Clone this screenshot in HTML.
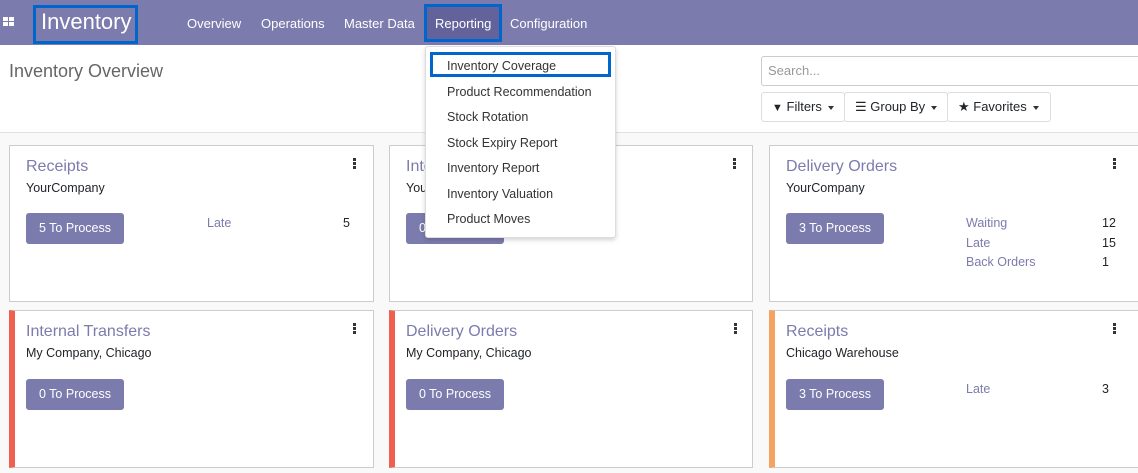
<!DOCTYPE html>
<html><head><style>
*{box-sizing:border-box;margin:0;padding:0}
body{width:1138px;height:473px;overflow:hidden;background:#f9f9f9;font-family:"Liberation Sans",sans-serif;font-size:13px;color:#212529;position:relative}
.nav{position:absolute;left:0;top:0;width:1138px;height:45px;background:#7c7bad;color:#fff}
.nav .m{position:absolute;top:16px;font-size:13px}
.abs{position:absolute}
.cp{position:absolute;left:0;top:45px;width:1138px;height:88px;background:#fff;border-bottom:1px solid #dee2e6}
.card{position:absolute;background:#fff;border:1px solid #ccc}
.card .t{position:absolute;left:16px;top:12px;font-size:16px;color:#7c7bad}
.card .s{position:absolute;left:16px;top:35px;font-size:12.5px}
.btn{position:absolute;left:16px;width:98px;height:31px;background:#7c7bad;color:#fff;border-radius:3px;font-size:12.5px;line-height:31px;text-align:center}
.dots{position:absolute;width:3px;top:12px}
.dots i{display:block;width:3px;height:3px;background:#333;margin-bottom:1px}
.lk{position:absolute;color:#7c7bad;font-size:12.5px}
.num{position:absolute;font-size:12.5px}
.dd{position:absolute;left:425px;top:46px;width:191px;height:192px;background:#fff;border:1px solid #ddd;border-radius:3px;box-shadow:0 2px 5px rgba(0,0,0,.18)}
.dd div{position:absolute;left:21px;font-size:12.5px;color:#333}
.fb{position:absolute;top:92px;height:30px;background:#fff;border:1px solid #ddd;border-radius:3px;font-size:13px;line-height:28px;padding-left:10px}
.car{display:inline-block;width:0;height:0;border-left:3.5px solid transparent;border-right:3.5px solid transparent;border-top:4px solid #333;vertical-align:middle;margin-left:6px}
</style></head><body>
<div class="nav">
  <div class="abs" style="left:3px;top:17px;width:12px;height:10px">
    <div class="abs" style="left:0;top:0;width:5px;height:4px;background:#fff"></div>
    <div class="abs" style="left:6px;top:0;width:5px;height:4px;background:#fff"></div>
    <div class="abs" style="left:0;top:5px;width:5px;height:4px;background:#fff"></div>
    <div class="abs" style="left:6px;top:5px;width:5px;height:4px;background:#fff"></div>
  </div>
  <div class="abs" style="left:33px;top:5px;width:105px;height:39px;border:3px solid #0066cc"></div>
  <div class="abs" style="left:41px;top:9px;font-size:22px;color:#fff">Inventory</div>
  <div class="m" style="left:187px">Overview</div>
  <div class="m" style="left:261px">Operations</div>
  <div class="m" style="left:344px">Master Data</div>
  <div class="abs" style="left:424px;top:4px;width:78px;height:38px;background:#63629a;border:3px solid #0066cc"></div>
  <div class="m" style="left:435px">Reporting</div>
  <div class="m" style="left:510px">Configuration</div>
</div>
<div class="cp">
  <div class="abs" style="left:9px;top:16px;font-size:18px;color:#666">Inventory Overview</div>
  <div class="abs" style="left:761px;top:11px;width:390px;height:30px;border:1px solid #ccc;border-radius:3px;color:#999;font-size:13px;line-height:28px;padding-left:6px">Search...</div>
</div>
<div class="fb" style="left:761px;width:84px"><b style="font-size:11px">&#9660;</b> Filters<span class="car"></span></div>
<div class="fb" style="left:844px;width:104px">&#9776; Group By<span class="car"></span></div>
<div class="fb" style="left:947px;width:104px">&#9733; Favorites<span class="car"></span></div>

<div class="card" style="left:9px;top:145px;width:365px;height:157px">
  <div class="t">Receipts</div><div class="s">YourCompany</div>
  <div class="btn" style="top:67px">5 To Process</div>
  <div class="lk" style="left:197px;top:70px">Late</div><div class="num" style="left:333px;top:70px">5</div>
  <div class="dots" style="left:343px"><i></i><i></i><i></i></div>
</div>
<div class="card" style="left:389px;top:145px;width:364px;height:157px">
  <div class="t">Internal Transfers</div><div class="s">YourCompany</div>
  <div class="btn" style="top:67px">0 To Process</div>
  <div class="dots" style="left:343px"><i></i><i></i><i></i></div>
</div>
<div class="card" style="left:769px;top:145px;width:370px;height:157px">
  <div class="t">Delivery Orders</div><div class="s">YourCompany</div>
  <div class="btn" style="top:67px">3 To Process</div>
  <div class="lk" style="left:196px;top:70px">Waiting</div><div class="num" style="left:332px;top:70px">12</div>
  <div class="lk" style="left:196px;top:90px">Late</div><div class="num" style="left:332px;top:90px">15</div>
  <div class="lk" style="left:196px;top:109px">Back Orders</div><div class="num" style="left:332px;top:109px">1</div>
  <div class="dots" style="left:343px"><i></i><i></i><i></i></div>
</div>

<div class="card" style="left:9px;top:310px;width:365px;height:158px;border-left:6px solid #f06050">
  <div class="t" style="left:11px">Internal Transfers</div><div class="s" style="left:11px">My Company, Chicago</div>
  <div class="btn" style="top:68px;left:11px">0 To Process</div>
  <div class="dots" style="left:338px"><i></i><i></i><i></i></div>
</div>
<div class="card" style="left:389px;top:310px;width:364px;height:158px;border-left:6px solid #f06050">
  <div class="t" style="left:11px">Delivery Orders</div><div class="s" style="left:11px">My Company, Chicago</div>
  <div class="btn" style="top:68px;left:11px">0 To Process</div>
  <div class="dots" style="left:339px"><i></i><i></i><i></i></div>
</div>
<div class="card" style="left:769px;top:310px;width:370px;height:158px;border-left:6px solid #f4a460">
  <div class="t" style="left:11px">Receipts</div><div class="s" style="left:11px">Chicago Warehouse</div>
  <div class="btn" style="top:68px;left:11px">3 To Process</div>
  <div class="lk" style="left:191px;top:71px">Late</div><div class="num" style="left:327px;top:71px">3</div>
  <div class="dots" style="left:338px"><i></i><i></i><i></i></div>
</div>

<div class="dd">
  <div class="abs" style="left:4px;top:5px;width:181px;height:25px;border:3px solid #0066cc"></div>
  <div style="top:12px">Inventory Coverage</div>
  <div style="top:38px">Product Recommendation</div>
  <div style="top:63px">Stock Rotation</div>
  <div style="top:89px">Stock Expiry Report</div>
  <div style="top:114px">Inventory Report</div>
  <div style="top:140px">Inventory Valuation</div>
  <div style="top:165px">Product Moves</div>
</div>
</body></html>
